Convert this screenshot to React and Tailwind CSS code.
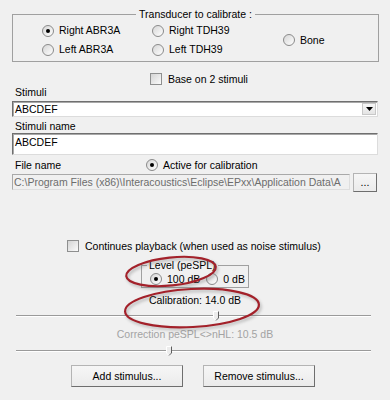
import React from "react";

const Radio = ({ checked, label, className = "" }) => (
  <label className={`flex items-center gap-[5px] ${className}`}>
    <span className="w-[12px] h-[12px] rounded-full border border-[#8a8a8a] bg-gradient-to-br from-[#d6d6d6] to-white flex items-center justify-center shrink-0">
      {checked && <span className="w-[4px] h-[4px] rounded-full bg-black" />}
    </span>
    <span className="whitespace-nowrap">{label}</span>
  </label>
);

const Checkbox = ({ label, className = "" }) => (
  <label className={`flex items-center gap-[6px] ${className}`}>
    <span className="w-[12px] h-[12px] border border-[#8e8f8f] bg-gradient-to-br from-[#d4d4d4] to-[#fbfbfb] shrink-0" />
    <span className="whitespace-nowrap">{label}</span>
  </label>
);

const Thumb = () => (
  <svg width="7" height="10" viewBox="0 0 7 10">
    <path d="M0.5 0.5 H5.5 V7 L3 9.5 L0.5 7 Z" fill="#ececec" stroke="#ffffff" />
    <path d="M5.5 0.5 V7 L3 9.5" fill="none" stroke="#5e5e5e" />
  </svg>
);

// track + thumb, thumb sits over the track
const Slider = ({ thumbClass }) => (
  <div className="relative ml-[4px] w-[355px] h-[12px]">
    <div className="absolute left-0 right-0 top-[5px] h-[2px] border-t border-[#9a9a9a] border-b border-b-white" />
    <div className={`absolute top-[1px] ${thumbClass}`}>
      <Thumb />
    </div>
  </div>
);

const sunken =
  "border border-t-[#6f6f6f] border-l-[#6f6f6f] border-r-[#dcdcdc] border-b-[#dcdcdc] shadow-[inset_1px_1px_0_#a8a8a8]";

const button =
  "flex items-center justify-center border border-[#b4b4b4] border-r-[#6e6e6e] border-b-[#6e6e6e] bg-gradient-to-b from-[#f6f6f6] to-[#ebebeb]";

export default function App() {
  return (
    <div className="relative w-[390px] h-[400px] overflow-hidden bg-[#f0f0f0] text-[10.5px] leading-[13px] text-black font-['Liberation_Sans',Arial,sans-serif]">
      <div className="px-3 pt-[8px]">
        {/* Transducer group */}
        <fieldset className="border border-[#a0a0a0] w-[367px] pb-[2px]">
          <legend className="mx-auto px-[3px]">Transducer to calibrate :</legend>
          <div className="grid grid-cols-[110px_131px_auto] grid-rows-[19px_19px] pl-[29px]">
            <Radio checked label="Right ABR3A" />
            <Radio label="Right TDH39" />
            <Radio label="Bone" className="row-span-2 self-center" />
            <Radio label="Left ABR3A" />
            <Radio label="Left TDH39" />
          </div>
        </fieldset>

        <Checkbox label="Base on 2 stimuli" className="mt-[10px] h-[14px] ml-[138px]" />

        <div className="h-[13px] pl-[3px]">Stimuli</div>
        <div className={`mt-[2px] w-[366px] h-[16px] bg-white flex items-center justify-between ${sunken}`}>
          <span className="pl-[2px]">ABCDEF</span>
          <span className="mr-[1px] w-[14px] h-[12px] border border-[#c8c8c8] bg-gradient-to-b from-[#f7f7f7] to-[#e4e4e4] flex items-center justify-center">
            <svg width="7" height="4" viewBox="0 0 7 4">
              <path d="M0 0 H7 L3.5 4 Z" fill="#000" />
            </svg>
          </span>
        </div>

        <div className="mt-[3px] h-[13px] pl-[3px]">Stimuli name</div>
        <div className={`w-[366px] h-[22px] bg-white pl-[2px] pt-[2px] ${sunken}`}>ABCDEF</div>

        <div className="mt-[3px] h-[14px] flex items-center">
          <span className="pl-[3px] w-[134px]">File name</span>
          <Radio checked label="Active for calibration" className="gap-[4px]" />
        </div>

        <div className="mt-[1px] flex items-start gap-[3px]">
          <div className="mt-[1px] w-[338px] h-[16px] border border-[#a9a9a9] border-r-[#dedede] border-b-[#dedede] pl-[1px] flex items-center overflow-hidden whitespace-nowrap text-[#6d6d6d]">
            C:\Program Files (x86)\Interacoustics\Eclipse\EPxx\Application Data\A
          </div>
          <div className={`w-[24px] h-[19px] ${button}`}>...</div>
        </div>

        <Checkbox
          label="Continues playback (when used as noise stimulus)"
          className="mt-[47px] h-[14px] ml-[55px]"
        />

        {/* Level group */}
        <fieldset className="mt-[6px] mx-auto w-[108px] border border-[#a0a0a0] pb-[1px]">
          <legend className="ml-[5px] px-[2px]">Level (peSPL)</legend>
          <div className="h-[14px] pl-[8px] flex items-center gap-[6px]">
            <Radio checked label="100 dB" className="gap-[4px]" />
            <Radio label="0 dB" className="gap-[5px]" />
          </div>
        </fieldset>

        <div className="mt-[6px] text-center">Calibration: 14.0 dB</div>
        <div className="mt-[3px]">
          <Slider thumbClass="left-[197px]" />
        </div>

        <div className="mt-[6px] text-center text-[#a3a3a3]">Correction peSPL&lt;&gt;nHL: 10.5 dB</div>
        <div className="mt-[4px]">
          <Slider thumbClass="left-[150px]" />
        </div>

        <div className="mt-[8px] flex gap-[20px] ml-[59px]">
          <div className={`w-[112px] h-[22px] ${button}`}>Add stimulus...</div>
          <div className={`w-[112px] h-[22px] ${button}`}>Remove stimulus...</div>
        </div>
      </div>

      {/* red hand-drawn annotation rings */}
      <svg className="absolute inset-0 pointer-events-none" width="390" height="400" viewBox="0 0 390 400">
        <defs>
          <filter id="soft" x="-20%" y="-50%" width="140%" height="200%">
            <feGaussianBlur stdDeviation="1.5" />
          </filter>
        </defs>
        <g fill="none" opacity="0.35" stroke="#555" strokeWidth="2.5" filter="url(#soft)">
          <ellipse cx="172.5" cy="273.5" rx="45" ry="14" transform="rotate(-6 172.5 273.5)" />
          <ellipse cx="193.5" cy="310" rx="67" ry="19" transform="rotate(-3 193.5 310)" />
        </g>
        <g fill="none" stroke="#a3212a" strokeWidth="2.2">
          <ellipse cx="171" cy="271.5" rx="45" ry="14" transform="rotate(-6 171 271.5)" />
          <ellipse cx="192" cy="308" rx="67" ry="19" transform="rotate(-3 192 308)" />
        </g>
      </svg>
    </div>
  );
}
